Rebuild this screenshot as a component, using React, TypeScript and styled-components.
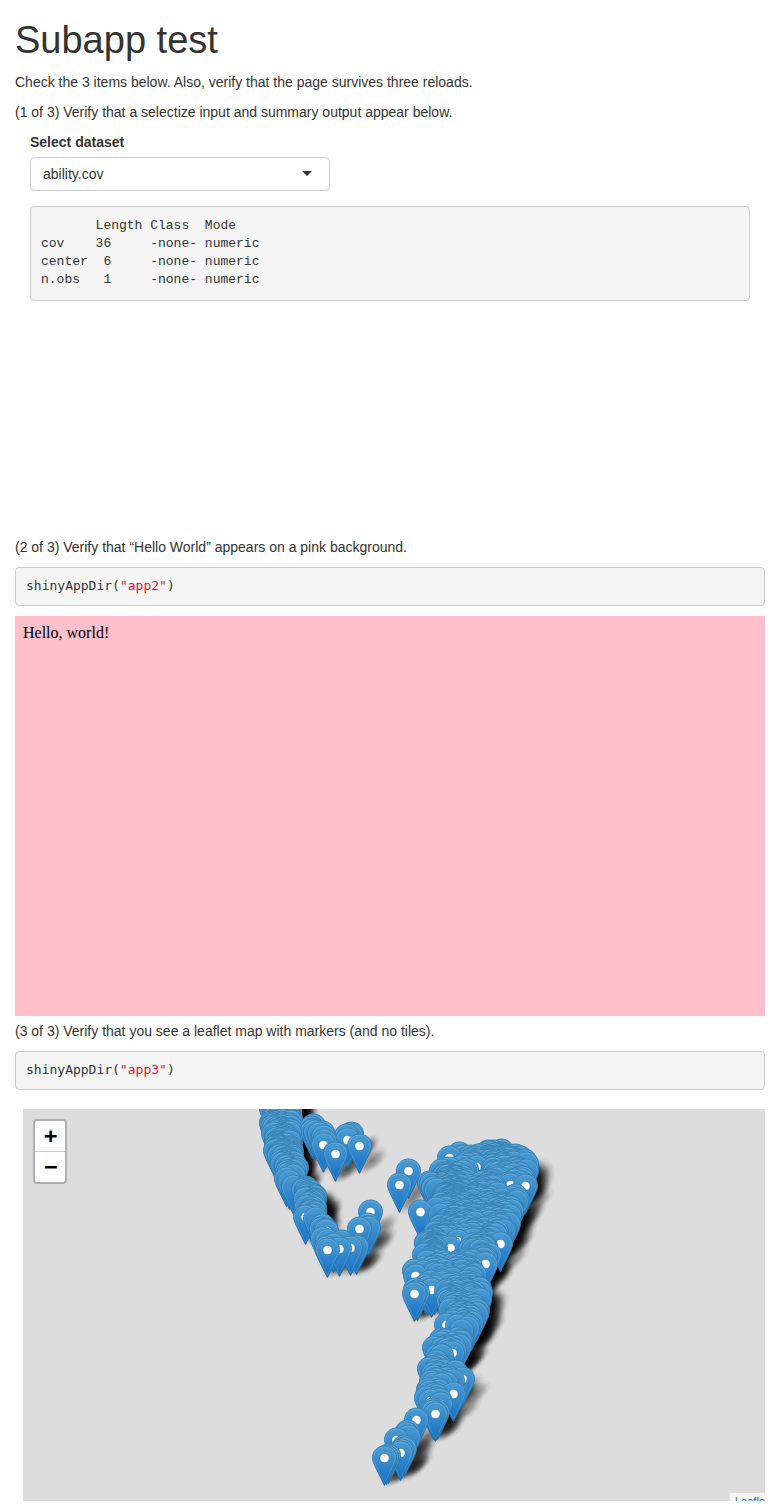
import React from "react";
import styled, { createGlobalStyle } from "styled-components";

const GlobalStyle = createGlobalStyle`
  *, *::before, *::after { box-sizing: border-box; }
  body {
    margin: 0;
    background: #fff;
    color: #333;
    font-family: "Liberation Sans", Arial, sans-serif;
    font-size: 14px;
    line-height: 20px;
  }
`;

const Page = styled.main`
  padding: 20px 15px 5px;
`;

const Title = styled.h1`
  margin: 0 0 12px;
  font-size: 38px;
  font-weight: 500;
  line-height: 40px;
`;

const Paragraph = styled.p`
  margin: 0 0 10px;
`;

const Frame = styled.section`
  height: 400px;
  margin-bottom: 5px;
  overflow: hidden;
`;

const SummaryFrame = styled(Frame)`
  padding: 0 15px;
`;

const HelloFrame = styled(Frame)`
  padding: 8px;
  background: pink;
  color: #000;
  font-family: "Liberation Serif", "Times New Roman", serif;
  font-size: 16px;
  line-height: 18px;
`;

const MapFrame = styled.section`
  padding: 9px 0 0 8px;
`;

const Label = styled.label`
  display: block;
  margin-bottom: 5px;
  font-weight: 700;
`;

const SelectBox = styled.div`
  display: grid;
  align-items: center;
  width: 300px;
  max-width: 100%;
  margin-bottom: 15px;
`;

const Select = styled.select`
  grid-area: 1 / 1;
  appearance: none;
  width: 100%;
  height: 34px;
  padding: 0 12px;
  border: 1px solid #ccc;
  border-radius: 4px;
  background: #fff;
  color: #333;
  font: inherit;
`;

const Caret = styled.span`
  grid-area: 1 / 1;
  justify-self: end;
  margin: 0 18px 2px 0;
  border: 5px solid transparent;
  border-top-color: #333;
  border-bottom: 0;
  pointer-events: none;
`;

const CodeBlock = styled.pre<{ $output?: boolean }>`
  margin: 0 0 10px;
  padding: ${(p) => (p.$output ? "10px 10px 11px" : "9px 10px 10px")};
  border: 1px solid #ccc;
  border-radius: 4px;
  background: #f5f5f5;
  font-family: ${(p) =>
    p.$output
      ? '"Liberation Mono", "Courier New", monospace'
      : '"DejaVu Sans Mono", monospace'};
  font-size: 13px;
  line-height: 18px;
`;

const Code = styled.code`
  font: inherit;
`;

const StringToken = styled.span`
  color: #d14;
`;

const Map = styled.div`
  position: relative;
  height: 392px;
  overflow: hidden;
  background: #ddd;
`;

const MarkerPane = styled.svg`
  display: block;
  width: 100%;
  height: 100%;
`;

const ZoomControl = styled.div`
  position: absolute;
  top: 10px;
  left: 10px;
  display: flex;
  flex-direction: column;
  border: 2px solid rgba(0, 0, 0, 0.2);
  border-radius: 4px;
  background: #fff;
  background-clip: padding-box;
`;

const ZoomButton = styled.button`
  width: 30px;
  height: 30px;
  padding: 0;
  border: 0;
  background: none;
  color: #000;
  font: bold 22px/30px "DejaVu Sans Mono", monospace;
  text-indent: 1px;

  & + & {
    height: 31px;
    border-top: 1px solid #ccc;
  }
`;

const Attribution = styled.div`
  position: absolute;
  right: -8px;
  bottom: -8px;
  padding: 0 5px;
  background: rgba(255, 255, 255, 0.7);
  font-size: 11px;
  line-height: 16px;
`;

const AttributionLink = styled.a`
  color: #0078a8;
  text-decoration: none;
`;

/* World pixel at the top left corner of the map. */
const ORIGIN = { x: 22.5, y: 1109 };

type Pin = { x: number; y: number; hole: boolean };

/* Pins whose hole stays in view; x and y are the centre of the head. */
const openPins: [number, number][] = [
  [313, 1130], [323, 1145], [335, 1154], [347, 1140], [359, 1146],
  [293, 1176], [305, 1217], [326, 1231], [370, 1212], [359, 1229],
  [327, 1250], [339, 1249], [350, 1248],
  [449, 1158], [476, 1167], [510, 1185], [525, 1186], [436, 1209],
  [450, 1248], [457, 1241], [500, 1244], [485, 1264], [415, 1276],
  [431, 1290], [414, 1294], [420, 1212], [408, 1171], [399, 1185],
  [446, 1325], [452, 1353], [462, 1379], [453, 1394], [435, 1414],
  [440, 1404], [430, 1401], [416, 1420], [406, 1434], [396, 1440],
  [400, 1453], [384, 1458],
];

/* Pins that lie partly under, or partly over, a neighbour. */
const coveredPins: [number, number][] = [
  [311, 1128], [313, 1126], [312, 1131], [315, 1132], [319, 1134],
  [323, 1137], [324, 1141], [322, 1133], [351, 1134], [346, 1136],
  [350, 1135], [335, 1153], [368, 1228], [367, 1225], [356, 1247],
  [333, 1245], [341, 1242], [351, 1246], [356, 1246], [326, 1248],
  [276, 1150], [275, 1151], [449, 1169], [459, 1154], [470, 1157],
  [488, 1152], [482, 1155], [478, 1156], [495, 1155], [504, 1156],
  [515, 1156], [508, 1158], [520, 1158], [524, 1161], [526, 1164],
  [441, 1171], [429, 1183], [431, 1184], [433, 1188], [436, 1190],
  [446, 1347], [434, 1348], [439, 1355], [441, 1356], [407, 1432],
  [408, 1437], [404, 1447], [404, 1449], [388, 1456], [386, 1457],
  [437, 1412], [433, 1412], [433, 1410], [417, 1293], [415, 1290],
  [416, 1292], [425, 1286], [427, 1288], [434, 1287], [414, 1271],
  [401, 1451], [293, 1187], [286, 1179], [289, 1182], [315, 1219],
  [327, 1241], [322, 1239], [466, 1170], [462, 1172], [440, 1215],
  [446, 1213], [511, 1198], [515, 1196], [457, 1326], [463, 1325],
  [452, 1381], [446, 1384],
];

/* Seismic belts: head centre rows as [y, left, right, pins per row]. */
type Row = [number, number, number, number];

const belts: Row[][] = [
  [
    [1095, 271, 290, 2], [1118, 271, 291, 2], [1128, 270, 290, 2],
    [1140, 274, 290, 2], [1150, 275, 291, 2], [1160, 280, 292, 1.6],
    [1168, 283, 296, 1], [1178, 290, 298, 0.8], [1187, 297, 306, 1],
    [1196, 303, 316, 1.2], [1206, 305, 316, 0.8], [1218, 311, 317, 0.7],
    [1228, 314, 324, 0.7], [1238, 317, 333, 0.8], [1245, 324, 334, 0.5],
  ],
  [
    [1157, 462, 514, 3], [1162, 455, 524, 4], [1170, 446, 526, 4],
    [1180, 440, 526, 4], [1190, 436, 523, 4], [1200, 440, 519, 4],
    [1210, 441, 515, 4], [1220, 440, 509, 4], [1232, 434, 505, 4],
    [1240, 426, 497, 4], [1250, 424, 494, 4], [1260, 424, 488, 3.4],
    [1270, 418, 482, 3], [1280, 416, 476, 2], [1286, 440, 480, 2],
  ],
  [
    [1287, 446, 481, 2], [1300, 445, 480, 2.2], [1310, 447, 478, 1.6],
    [1320, 447, 474, 1.3], [1330, 443, 470, 1.2], [1340, 436, 464, 1.2],
    [1350, 433, 459, 1], [1358, 438, 455, 0.7], [1366, 429, 453, 1],
    [1380, 431, 459, 1.1], [1390, 427, 450, 0.8], [1402, 423, 440, 0.7],
  ],
  [[1172, 445, 456, 0.8], [1190, 446, 462, 1.8], [1212, 438, 458, 1.8], [1228, 438, 448, 1]],
  [[1148, 490, 500, 0], [1155, 485, 508, 1.6], [1164, 488, 510, 1]],
  [[1244, 430, 440, 1.6], [1262, 430, 442, 1.6]],
];

function createRandom(seed: number) {
  let state = seed;
  return () => {
    state = (state * 1664525 + 1013904223) % 4294967296;
    return state / 4294967296;
  };
}

function fillBelt(rows: Row[], random: () => number): Pin[] {
  const pins: Pin[] = [];
  let pending = 0;
  for (let i = 0; i < rows.length - 1; i++) {
    const [y0, l0, r0, n0] = rows[i];
    const [y1, l1, r1, n1] = rows[i + 1];
    for (let y = y0; y < y1; y++) {
      const t = (y - y0) / (y1 - y0);
      const left = l0 + (l1 - l0) * t;
      const right = r0 + (r1 - r0) * t;
      pending += n0 + (n1 - n0) * t;
      while (pending >= 1) {
        pending -= 1;
        pins.push({ x: Math.round(left + (right - left) * random()), y, hole: false });
      }
    }
  }
  return pins;
}

function hidesHole(pin: Pin) {
  return openPins.some(
    ([x, y]) => pin.y >= y && Math.hypot(pin.x - x, pin.y - y) < 15
  );
}

const random = createRandom(1964);

const pins: Pin[] = [
  ...belts.flatMap((rows) => fillBelt(rows, random)).filter((pin) => !hidesHole(pin)),
  ...coveredPins.map(([x, y]) => ({ x, y, hole: false })),
  ...openPins.map(([x, y]) => ({ x, y, hole: true })),
].sort((a, b) => a.y - b.y);

function Markers() {
  return (
    <MarkerPane role="img" aria-label="Map markers">
      <defs>
        <linearGradient id="pin-fill" x1="0" y1="0" x2="0" y2="1">
          <stop offset="0" stopColor="#4c9cd1" />
          <stop offset="1" stopColor="#126fc6" />
        </linearGradient>
        <linearGradient id="pin-edge" x1="0" y1="0" x2="0" y2="1">
          <stop offset="0" stopColor="#3883b7" />
          <stop offset="1" stopColor="#2e6c97" />
        </linearGradient>
        <radialGradient id="pin-shade">
          <stop offset="0" stopColor="#000" stopOpacity="0.42" />
          <stop offset="0.45" stopColor="#000" stopOpacity="0.26" />
          <stop offset="0.75" stopColor="#000" stopOpacity="0.07" />
          <stop offset="1" stopColor="#000" stopOpacity="0" />
        </radialGradient>
        <ellipse id="pin-shadow" cx="12" cy="15" rx="21" ry="10" fill="url(#pin-shade)" transform="rotate(-38 12 15)" />
        <g id="pin">
          <path
            d="M0 -12C-6.700 -12 -12 -6.700 -12 -.4C-12 2.700 -10.400 6.300 -9.300 8.600L0 27.500L9.300 8.600C10.400 6.300 12 2.700 12 -.4C12 -6.700 6.700 -12 0 -12Z"
            fill="url(#pin-fill)"
            stroke="url(#pin-edge)"
          />
          <path
            d="M0 -10.900C-6.100 -10.900 -10.900 -6.100 -10.900 -.4C-10.900 2.500 -9.400 5.900 -8.300 8.100L0 25L8.300 8.100C9.400 5.900 10.900 2.500 10.900 -.4C10.900 -6.100 6.100 -10.900 0 -10.900Z"
            fill="none"
            stroke="#fff"
            strokeOpacity="0.12"
          />
        </g>
        <circle id="pin-hole" r="4.600" fill="#fff" stroke="#2e6c97" strokeOpacity="0.6" strokeWidth="0.800" />
      </defs>
      <g transform={`translate(${-ORIGIN.x} ${-ORIGIN.y})`}>
        {pins.map((pin, i) => (
          <use key={i} href="#pin-shadow" x={pin.x} y={pin.y} />
        ))}
        {pins.map((pin, i) => (
          <React.Fragment key={i}>
            <use href="#pin" x={pin.x} y={pin.y} />
            {pin.hole && <use href="#pin-hole" x={pin.x} y={pin.y} />}
          </React.Fragment>
        ))}
      </g>
    </MarkerPane>
  );
}

const summary = `       Length Class  Mode   
cov    36     -none- numeric
center  6     -none- numeric
n.obs   1     -none- numeric`;

function AppCall({ name }: { name: string }) {
  return (
    <CodeBlock>
      <Code>
        shinyAppDir(<StringToken>"{name}"</StringToken>)
      </Code>
    </CodeBlock>
  );
}

export default function App() {
  return (
    <>
      <GlobalStyle />
      <Page>
        <Title>Subapp test</Title>
        <Paragraph>
          Check the 3 items below. Also, verify that the page survives three reloads.
        </Paragraph>
        <Paragraph>
          (1 of 3) Verify that a selectize input and summary output appear below.
        </Paragraph>
        <SummaryFrame>
          <Label htmlFor="dataset">Select dataset</Label>
          <SelectBox>
            <Select id="dataset" defaultValue="ability.cov">
              <option>ability.cov</option>
            </Select>
            <Caret />
          </SelectBox>
          <CodeBlock $output>{summary}</CodeBlock>
        </SummaryFrame>
        <Paragraph>(2 of 3) Verify that “Hello World” appears on a pink background.</Paragraph>
        <AppCall name="app2" />
        <HelloFrame>Hello, world!</HelloFrame>
        <Paragraph>(3 of 3) Verify that you see a leaflet map with markers (and no tiles).</Paragraph>
        <AppCall name="app3" />
        <MapFrame>
          <Map>
            <Markers />
            <ZoomControl>
              <ZoomButton type="button" aria-label="Zoom in">+</ZoomButton>
              <ZoomButton type="button" aria-label="Zoom out">−</ZoomButton>
            </ZoomControl>
            <Attribution>
              <AttributionLink href="#leaflet">Leaflet</AttributionLink>
            </Attribution>
          </Map>
        </MapFrame>
      </Page>
    </>
  );
}
